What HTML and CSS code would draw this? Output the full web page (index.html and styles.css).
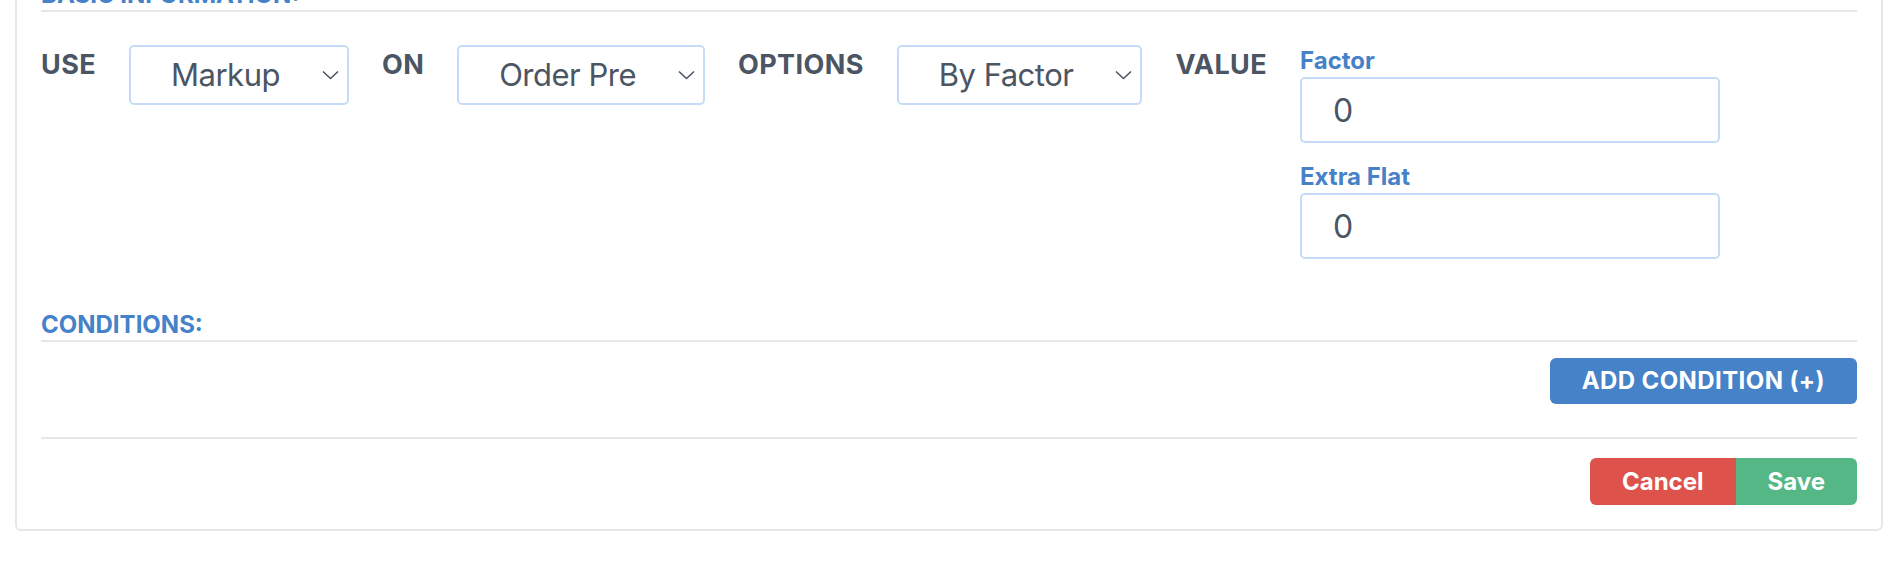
FILE: index.html
```html
<!DOCTYPE html>
<html lang="en">
<head>
<meta charset="utf-8">
<title>Pricing rule</title>
<link rel="stylesheet" href="styles.css">
</head>
<body>
<div class="card">
  <h2 class="section-title">BASIC INFORMATION:</h2>
  <div class="rule-row">
    <span class="field-label">USE</span>
    <div class="select">
      <span class="select-text">Markup</span>
      <svg class="chevron" width="17" height="10" viewBox="0 0 17 10"><polyline points="1,1.5 8.5,8.5 16,1.5" fill="none" stroke="#4b5563" stroke-width="1.6"/></svg>
    </div>
    <span class="field-label">ON</span>
    <div class="select">
      <span class="select-text">Order Pre</span>
      <svg class="chevron" width="17" height="10" viewBox="0 0 17 10"><polyline points="1,1.5 8.5,8.5 16,1.5" fill="none" stroke="#4b5563" stroke-width="1.6"/></svg>
    </div>
    <span class="field-label">OPTIONS</span>
    <div class="select">
      <span class="select-text">By Factor</span>
      <svg class="chevron" width="17" height="10" viewBox="0 0 17 10"><polyline points="1,1.5 8.5,8.5 16,1.5" fill="none" stroke="#4b5563" stroke-width="1.6"/></svg>
    </div>
    <span class="field-label">VALUE</span>
    <div class="value-col">
      <label class="sub-label">Factor</label>
      <div class="text-input">0</div>
      <label class="sub-label sub-label-spaced">Extra Flat</label>
      <div class="text-input">0</div>
    </div>
  </div>
  <h2 class="section-title section-conditions">CONDITIONS:</h2>
  <div class="actions-right">
    <button class="btn btn-blue">ADD CONDITION (+)</button>
  </div>
  <div class="footer">
    <div class="btn-group">
      <button class="btn btn-red">Cancel</button>
      <button class="btn btn-green">Save</button>
    </div>
  </div>
</div>
</body>
</html>
```
FILE: styles.css
```css
html, body {
  margin: 0;
  padding: 0;
  background: #ffffff;
}
body {
  font-family: Inter, "Liberation Sans", Arial, sans-serif;
  color: #4b5563;
  overflow: hidden;
}
.card {
  margin: -44px 21px 0 15px;
  border: 2px solid #e5e7eb;
  border-radius: 6px;
  padding: 24px 24px 24px 24px;
  background: #ffffff;
}
.section-title {
  margin: 0;
  font-size: 24px;
  line-height: 26px;
  font-weight: 700;
  color: #4682c8;
  padding-bottom: 2px;
  border-bottom: 2px solid #e5e7eb;
}
.rule-row {
  display: flex;
  align-items: flex-start;
  gap: 33px;
  margin-top: 33px;
}
.field-label {
  font-size: 27px;
  line-height: 30px;
  font-weight: 700;
  letter-spacing: 0.4px;
  margin-top: 5px;
  color: #4b5563;
}
.select {
  box-sizing: border-box;
  height: 60px;
  display: flex;
  align-items: center;
  gap: 42px;
  padding: 0 8px 0 40px;
  border: 2px solid #c5dcf8;
  border-radius: 5px;
  background: #ffffff;
}
.select-text {
  font-size: 31px;
  line-height: 38px;
  letter-spacing: -0.5px;
  color: #4b5563;
  white-space: nowrap;
}
.chevron {
  display: block;
  flex: none;
}
.value-col {
  display: flex;
  flex-direction: column;
  width: 420px;
  margin-top: 3px;
}
.sub-label {
  font-size: 24px;
  line-height: 26px;
  font-weight: 700;
  color: #4682c8;
  margin-bottom: 3px;
}
.sub-label-spaced {
  margin-top: 21px;
}
.text-input {
  box-sizing: border-box;
  height: 66px;
  display: flex;
  align-items: center;
  padding-left: 31px;
  border: 2px solid #c5dcf8;
  border-radius: 5px;
  font-size: 32px;
  color: #4b5563;
}
.section-conditions {
  margin-top: 53px;
}
.actions-right {
  display: flex;
  justify-content: flex-end;
  margin-top: 16px;
}
.btn {
  font-family: Inter, "Liberation Sans", Arial, sans-serif;
  font-size: 24px;
  line-height: 26px;
  font-weight: 700;
  color: #ffffff;
  border: none;
  padding: 10px 32px;
  margin: 0;
  cursor: pointer;
}
.btn-blue {
  background: #4682c8;
  border-radius: 6px;
  letter-spacing: 0.4px;
}
.footer {
  display: flex;
  justify-content: flex-end;
  margin-top: 33px;
  border-top: 2px solid #e5e7eb;
  padding-top: 19px;
}
.btn-group {
  display: flex;
}
.btn-group .btn {
  line-height: 27px;
}
.btn-red {
  background: #de524c;
  border-radius: 6px 0 0 6px;
}
.btn-green {
  background: #54b785;
  border-radius: 0 6px 6px 0;
}
```
